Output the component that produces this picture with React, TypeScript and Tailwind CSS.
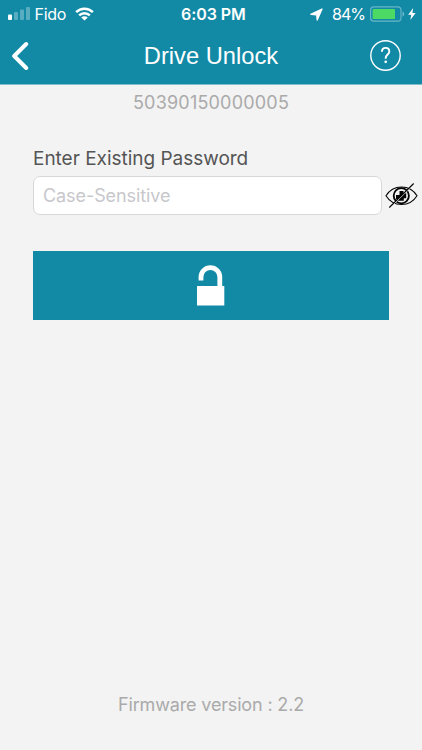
import React from "react";

function StatusBar() {
  return (
    <div className="relative flex h-7 items-center justify-between pl-2 pr-[6px] text-white">
      <div className="flex items-center">
        <svg width="23" height="14" viewBox="0 0 23 14" fill="currentColor">
          <rect x="0" y="7.5" width="4" height="5.5" rx="1" />
          <rect x="6" y="5" width="4" height="8" rx="1" opacity="0.3" />
          <rect x="12" y="2.5" width="4" height="10.5" rx="1" opacity="0.3" />
          <rect x="18" y="0" width="4" height="13" rx="1" opacity="0.3" />
        </svg>
        <span className="ml-[3.5px] text-[16px] tracking-[-0.25px]">Fido</span>
        <svg className="ml-[9px]" width="19" height="14" viewBox="0 0 20 14" fill="none" stroke="currentColor" strokeWidth="2.7">
          <path d="M1.2 5.1a12.5 12.5 0 0 1 17.6 0" />
          <path d="M4.4 8.5a8 8 0 0 1 11.2 0" />
          <path d="M10 13.8L6.6 10.7a4.8 4.8 0 0 1 6.8 0z" fill="currentColor" stroke="none" />
        </svg>
      </div>

      <span className="absolute left-[181px] text-[16px] font-semibold tracking-[-0.05px] whitespace-nowrap">6:03 PM</span>

      <div className="flex items-center">
        <svg width="13" height="13" viewBox="0 0 13 13" fill="currentColor" stroke="currentColor" strokeLinejoin="round">
          <path d="M12 1L0.800 6.300l5.900.5L7.200 12z" strokeWidth="1.3" />
        </svg>
        <span className="ml-[9px] text-[16px] tracking-[-1px]">84%</span>
        <svg className="ml-[5px]" width="35" height="16" viewBox="0 0 35 16" fill="none">
          <rect x="0.6" y="0.9" width="30.4" height="14.2" rx="3.2" stroke="#68b5c7" strokeWidth="1.2" />
          <path d="M32.6 5.4c2 1 2 4.200 0 5.200z" fill="#74bdcd" />
          <rect x="2.6" y="2.9" width="22.4" height="10.2" rx="1.2" fill="#4cd964" />
        </svg>
        <svg className="ml-[3px]" width="8" height="12" viewBox="0 0 8 12" fill="currentColor">
          <path d="M5.2 0L0.2 6.7h3.1L2.3 12 7.6 5H4.4z" />
        </svg>
      </div>
    </div>
  );
}

function NavBar() {
  return (
    <div className="relative flex h-[55px] items-center justify-between pl-[11px] pr-[21px] text-white">
      <button aria-label="Back">
        <svg width="18" height="30" viewBox="0 0 18 30" fill="none" stroke="currentColor" strokeWidth="4" strokeLinecap="round" strokeLinejoin="round">
          <path d="M15.2 3L3.2 15l12 12" />
        </svg>
      </button>
      <h1 className="absolute inset-x-0 text-center font-['Liberation_Sans',Arial,sans-serif] text-[23.7px] leading-7">
        Drive Unlock
      </h1>
      <button aria-label="Help">
        <svg width="31" height="31" viewBox="0 0 31 31" fill="none" stroke="currentColor">
          <circle cx="15.5" cy="15.5" r="14.7" strokeWidth="1.4" />
          <path d="M11.9 11.8c0-2.4 1.5-3.9 3.7-3.9s3.7 1.4 3.7 3.5c0 3-3.6 3.3-3.6 6.7v.6" strokeWidth="1.9" />
          <circle cx="15.7" cy="21.8" r="1.35" fill="currentColor" stroke="none" />
        </svg>
      </button>
    </div>
  );
}

function HiddenEyeIcon() {
  return (
    <svg width="33" height="26" viewBox="0 0 33 26" fill="none" stroke="#050505">
      <path d="M1 12.8C4.5 7 10 4 16.5 4S28.5 7 32 12.8C28.5 18.5 23 21.5 16.5 21.5S4.5 18.5 1 12.8z" strokeWidth="1.1" />
      <circle cx="16.3" cy="12.8" r="7.6" strokeWidth="1.8" />
      <path d="M14.5 8h4v2.3h2.7v5h-2.4v2.5h-6.5v-1.6h-1.3v-4.2h3.500z" fill="#050505" stroke="none" />
      <path d="M4.9 25L29.2 1.1" stroke="#f3f3f3" strokeWidth="1" />
      <path d="M4.3 24.5L28.7 0.5" strokeWidth="1.1" />
    </svg>
  );
}

export default function App() {
  return (
    <div className="flex h-[750px] w-[422px] flex-col overflow-hidden bg-[#f3f3f3] font-[Inter,sans-serif]">
      <header className="h-[85px] shrink-0 border-b border-[#83bccb] bg-[#128aa6]">
        <StatusBar />
        <NavBar />
      </header>

      <main className="flex flex-1 flex-col">
        <p className="mt-1.5 text-center text-[18px] leading-6 tracking-[0.2px] text-[#aaaaaa]">50390150000005</p>

        <label htmlFor="password" className="mt-8 pl-[33px] text-[19px] leading-6 tracking-[-0.02px] text-[#555555]">
          Enter Existing Password
        </label>
        <div className="mt-[5px] flex items-center pl-[33px]">
          <input
            id="password"
            type="password"
            placeholder="Case-Sensitive"
            className="h-[39px] w-[349px] rounded-[7px] border border-[#d8d8d8] bg-white px-[9px] text-[18px] tracking-[-0.08px] outline-none placeholder:text-[#c7c7cc]"
          />
          <button aria-label="Show password" className="ml-[3px]">
            <HiddenEyeIcon />
          </button>
        </div>

        <button aria-label="Unlock" className="mt-9 ml-[33px] flex h-[69px] w-[356px] items-center justify-center bg-[#128aa6]">
          <svg width="28" height="41" viewBox="0 0 28 41" fill="none">
            <path d="M4 15.5V12a9.4 9.4 0 0 1 18.8 0v10" stroke="white" strokeWidth="4.8" />
            <rect x="0" y="21" width="27.3" height="19.5" fill="white" />
          </svg>
        </button>
      </main>

      <footer className="pb-[33px] text-center text-[18px] leading-6 tracking-[-0.16px] text-[#aaaaaa]">
        Firmware version : 2.2
      </footer>
    </div>
  );
}
